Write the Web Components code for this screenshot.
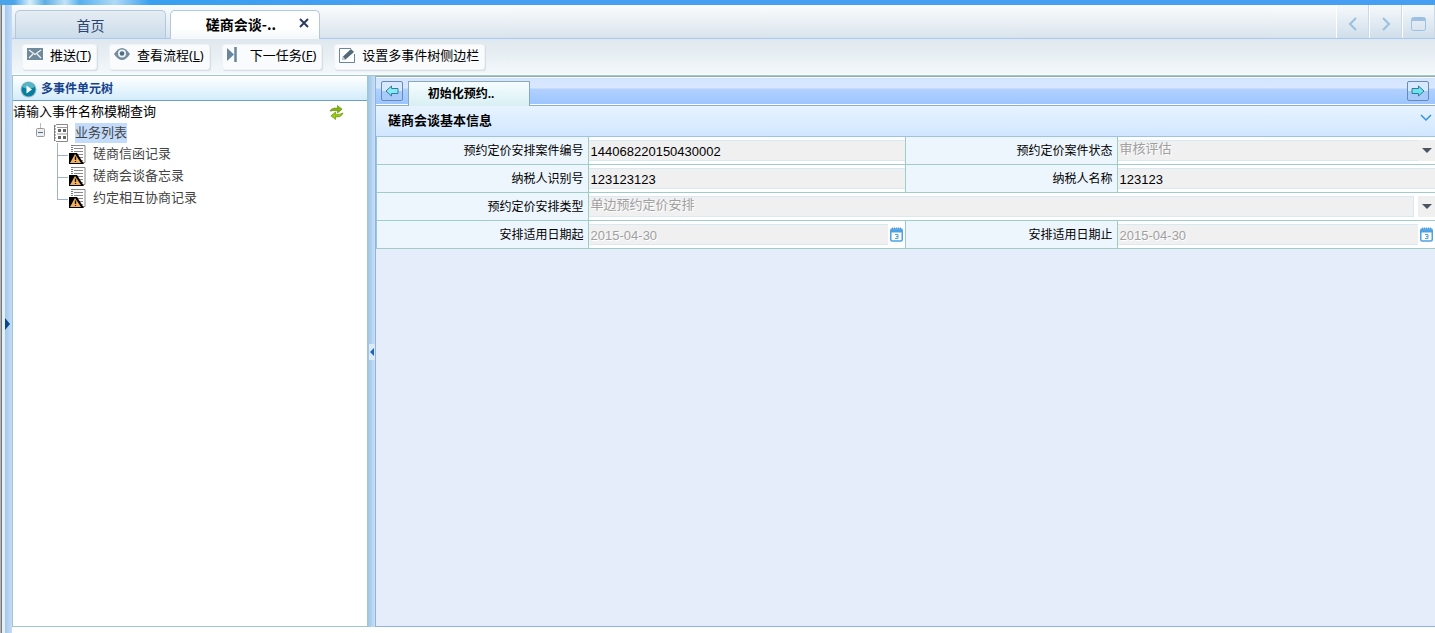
<!DOCTYPE html>
<html lang="zh-CN">
<head>
<meta charset="utf-8">
<title>磋商会谈</title>
<style>
html, body { margin: 0; }
body { font: 13px/20px "Liberation Sans", "Noto Sans CJK SC", sans-serif; color: #000; background: #fff; }
</style>
</head>
<body>
<app-shell>
  <tab-bar slot="tabs"></tab-bar>
  <tool-bar slot="tools">
    <tool-button key="T"><svg slot="icon" width="16" height="15" viewBox="0 0 16 15"><rect width="16" height="12" fill="#718a9b"/><path d="M2 2L8 6.500L14 2M2 10L6 6M14 10L10 6" fill="none" stroke="#edf3f6" stroke-width="1.300"/></svg>推送</tool-button>
    <tool-button key="L"><svg slot="icon" width="16" height="15" viewBox="0 0 16 15"><path d="M0 6Q8-6 16 6Q8 18 0 6Z" fill="#748c9e"/><circle cx="8" cy="5.500" r="4" fill="#edf3f6"/><circle cx="8" cy="5.500" r="2.300" fill="#526b7d"/></svg>查看流程</tool-button>
    <tool-button key="F"><svg slot="icon" width="16" height="16" viewBox="0 0 16 16"><path d="M0 1L7 7.500L0 14Z" fill="#68869c"/><path d="M8.500 0V15" stroke="#68869c" stroke-width="2.500"/></svg>下一任务</tool-button>
    <tool-button><svg slot="icon" width="16" height="17" viewBox="0 0 16 17"><path d="M12 1.500H.5V15.500H15.500V7" fill="#fff" stroke="#65879e"/><path d="M3 13L4 9.500L12 2L15 5L6.500 12.500Z" fill="#536879"/><path d="M3 13L4 9.500L6.500 12.500Z" fill="#c8d3da"/></svg>设置多事件树侧边栏</tool-button>
  </tool-bar>
  <side-panel slot="side" heading="多事件单元树"><event-tree></event-tree></side-panel>
  <work-area slot="main"><info-section heading="磋商会谈基本信息"><case-form></case-form></info-section></work-area>
</app-shell>
<script>
const define = (name, html, setup) => {
  const template = document.createElement('template');
  template.innerHTML = html;
  customElements.define(name, class extends HTMLElement {
    constructor() {
      super();
      this.attachShadow({ mode: 'open' }).append(template.content.cloneNode(true));
    }
    connectedCallback() { if (setup) setup(this, this.shadowRoot); }
  });
};

define('app-shell', `
<style>
:host { display: flex; flex-direction: column; min-height: 100vh; }
.band { height: 5px; background: linear-gradient(90deg, #49a4ea 0, #49a4ea 14px, #d8effb 30px, #5aaee4 45px, #c3e3f7 65px, #55b0ef 80px, #afdaf6 115px, #38a0ee 150px, #479ff4 400px); }
.body { flex: 1; display: flex; }
.rail { width: 12px; display: flex; align-items: center; box-sizing: border-box; padding: 10px 0 0 5px; background: linear-gradient(90deg, #b4b4b4 0 1px, #777 1px 2px, #e4eff8 2px 5px, #a4c8ee 5px, #c5dcf6 12px); }
.content { flex: 1; min-width: 0; display: flex; flex-direction: column; }
.panes { flex: 1; display: flex; border-top: 1px solid #9fc9c5; margin-bottom: 6px; }
slot[name=side]::slotted(*) { width: 354px; flex: none; }
.split { width: 7px; display: flex; align-items: center; justify-content: center; background: linear-gradient(90deg, #9ec5e4, #c8e0f6); }
.split button, .rail button { border: 0; padding: 0; background: none; display: flex; }
.split button { background: #dcebfa; padding: 4px 1px; }
slot[name=main]::slotted(*) { flex: 1; min-width: 0; }
</style>
<div class="band"></div>
<div class="body">
  <div class="rail"><button aria-label="展开"><svg width="6" height="12"><path d="M0 0L5 6L0 12Z" fill="#064788"/></svg></button></div>
  <div class="content">
    <slot name="tabs"></slot><slot name="tools"></slot>
    <div class="panes"><slot name="side"></slot>
      <div class="split"><button aria-label="收起"><svg width="4" height="8"><path d="M4 0L0 4L4 8Z" fill="#1d61c4"/></svg></button></div>
      <slot name="main"></slot></div>
  </div>
</div>`);

define('tab-bar', `
<style>
:host { display: flex; align-items: flex-end; height: 33px; border-bottom: 1px solid #a9c9ee; background: linear-gradient(#fafcfd, #dde6ee 90%, #d6e2ee); font-family: "Noto Sans CJK SC", sans-serif; padding-left: 3px; }
.tab { box-sizing: border-box; width: 151px; height: 28px; margin-right: 4px; border: 1px solid #b1c9df; border-bottom: 0; border-radius: 5px 5px 0 0; background: linear-gradient(#e6edf3, #cbdcea); color: #2d4471; font: inherit; font-size: 14px; padding: 0 10px 0; display: flex; align-items: center; justify-content: center; }
.active { height: 29px; width: 150px; margin-bottom: -1px; padding-bottom: 2px; background: linear-gradient(#fff, #fff 60%, #f3f7f9); color: #000; font-weight: bold; justify-content: flex-end; gap: 23px; }
.active button { border: 0; background: none; padding: 0 0 3px; display: flex; }
nav { margin-left: auto; display: flex; align-self: stretch; }
nav button { width: 33px; border: 0; border-left: 1px solid #fff; border-right: 1px solid #ccd9e6; background: linear-gradient(#f6f9fb, #cfdeeb); padding: 4px 0 0; display: flex; align-items: center; justify-content: center; }
svg { fill: none; stroke: #9dbfe0; stroke-width: 2; }
</style>
<button class="tab">首页</button>
<div class="tab active"><span>磋商会谈-..</span><button aria-label="关闭"><svg width="10" height="10" viewBox="0 0 10 10" style="stroke:#303c5c"><path d="M1 1L9 9M9 1L1 9"/></svg></button></div>
<nav>
<button aria-label="上一个"><svg width="10" height="14"><path d="M8 1L2 7L8 13"/></svg></button>
<button aria-label="下一个"><svg width="10" height="14"><path d="M2 1L8 7L2 13"/></svg></button>
<button aria-label="窗口"><svg width="15" height="14" viewBox="0 0 15 14"><rect x=".5" y=".5" width="14" height="13" rx="2" stroke-width="1"/><path d="M1 2.500H14" stroke-width="3"/></svg></button>
</nav>`);

define('tool-bar', `
<style>
:host { display: flex; align-items: flex-start; gap: 12px; height: 26px; padding: 5px 10px; background: linear-gradient(#dfe8ee, #f2f7fa 94%, #fff); }
</style><slot></slot>`);

define('tool-button', `
<style>
:host { display: block; }
button { height: 26px; border: 1px solid #eff3f6; border-radius: 3px; box-shadow: 1px 1px 1px #d5dde3; background: #f9fbfc; padding: 0 5px 4px 4px; display: flex; align-items: center; gap: 7px; font: 13px/20px "Noto Sans", "Noto Sans CJK SC", sans-serif; color: #000; white-space: nowrap; }
::slotted(svg) { flex: none; }
</style>
<button><slot name="icon"></slot><span><slot></slot><span class="key"></span></span></button>`,
(host, root) => {
  const key = host.getAttribute('key');
  if (key) root.querySelector('.key').innerHTML = '(<u>' + key + '</u>)';
});

define('side-panel', `
<style>
:host { display: block; background: #fff; border: 1px solid #9fc9c5; border-top: 0; }
header { height: 25px; box-sizing: border-box; padding: 2px 0 0 7px; display: flex; align-items: center; gap: 4px; border-bottom: 1px solid #6d9fcb; background: linear-gradient(#fff, #d3ecfb); color: #15428b; }
h2 { margin: 0; font-size: 12px; }
</style>
<header><svg width="17" height="17" viewBox="0 0 17 17"><circle cx="8.500" cy="8.500" r="8" fill="#a2bdc5"/><circle cx="8.500" cy="8.500" r="7" fill="#087e9e"/><path d="M2 6A7 7 0 0 1 15 6Q8 9 2 6Z" fill="#52b5c8"/><path d="M6.500 4.500L12 8.500L6.500 12.500Z" fill="#fff"/></svg><h2></h2></header>
<slot></slot>`,
(host, root) => { root.querySelector('h2').textContent = host.getAttribute('heading'); });

define('event-tree', `
<style>
:host { display: block; color: #444; }
.search { display: flex; justify-content: space-between; align-items: center; height: 22px; padding-right: 23px; color: #000; }
.search button { border: 0; padding: 0; background: none; display: flex; }
ul { list-style: none; margin: 0; padding: 0; }
.root { display: flex; align-items: center; height: 20px; padding-left: 22px; }
.root .icon { margin: 0 7px 0 8px; }
.root mark { background: #c4dcfc; color: inherit; }
li li { display: flex; align-items: center; height: 22px; padding-left: 44px; gap: 7px; }
</style>
<div class="search"><span>请输入事件名称模糊查询</span><button aria-label="刷新"><svg width="15" height="15" viewBox="0 0 16 15"><path d="M1 6Q3 2 9 3V0L14 4L9 8V5.500Q5 5 1 6Z" fill="#82b40c" stroke="#648b14" stroke-width=".7"/><path d="M15 8Q13 13 7 12V15L2 11L7 7V9.500Q11 10 15 8Z" fill="#9bca0a" stroke="#648b14" stroke-width=".7"/></svg></button></div>
<ul><li>
<div class="root"><svg width="11" height="20"><path d="M5.500 0V5" stroke="#bbb"/><rect x="1.500" y="5.500" width="8" height="8" rx="1" fill="#eee" stroke="#999"/><path d="M3 9.500H8" stroke="#456d9c"/></svg><svg class="icon" width="14" height="18" viewBox="0 0 14 18"><path d="M2 .5H13.500V17.500H2M.5 1V17" fill="#fff" stroke="#8a8a8a"/><path d="M.5 1V17" stroke="#777" stroke-width="2" stroke-dasharray="2 1"/><path d="M4 6.500H7M9 6.500H12M4 13.500H7M9 13.500H12" stroke="#666" stroke-width="3"/><path d="M3 3.500H13M3 10H13" stroke="#999"/></svg><mark>业务列表</mark></div>
<ul></ul></li></ul>`,
(host, root) => {
  root.querySelector('ul ul').innerHTML = ['磋商信函记录', '磋商会谈备忘录', '约定相互协商记录'].map((name, i) =>
    `<li><svg width="29" height="22" viewBox="0 0 29 22"><path d="M.5 0V${i < 2 ? 22 : 13}M1 12.500H11" fill="none" stroke="#9fb2c8"/><path d="M16 2.500H28V19.500H16" fill="#fff" stroke="#888"/><path d="M15 2V19" stroke="#777" stroke-width="2" stroke-dasharray="1 1"/><path d="M17 5.500H26M17 8.500H26M17 11.500H26M20 14.500H26M22 17.500H26" stroke="#888"/><path d="M12 10H20L27 21H12Z" fill="#000"/><path d="M18 11L24 20H13Z" fill="#f5b05b"/><path d="M18.500 13.500V17M18.500 18V19" stroke="#111" stroke-width="1.300"/></svg><span>${name}</span></li>`).join('');
});

define('work-area', `
<style>
:host { display: block; background: #e5ecfa; border: 1px solid #8db2e3; border-right: 0; border-top-color: #94aeb5; }
.bar { display: flex; align-items: center; justify-content: space-between; height: 28px; padding: 0 6px 0 5px; background: linear-gradient(#f4f8ff 0 1px, #d5e5ff 1px, #d9e7ff 11px, #b1d1ff 12px, #9cc6ff 27px, #fff 27px); border-bottom: 1px solid #8eafc4; }
.tab { height: 25px; width: 122px; margin: 4px auto -1px 5px; box-sizing: border-box; border: 1px solid #89a9b4; border-bottom: 0; background: linear-gradient(#f5fdff, #d9eff3); font: bold 12px/20px "Liberation Sans", "Noto Sans CJK SC", sans-serif; color: #000; padding: 0 16px 0 0; }
.nav { width: 22px; height: 20px; box-sizing: border-box; border: 1px solid #668ab9; border-radius: 2px; background: linear-gradient(#d8e8fd 0 50%, #a8caf8 50%); padding: 0; display: flex; align-items: center; justify-content: center; }
</style>
<div class="bar">
<button class="nav" aria-label="向左"><svg width="14" height="12" viewBox="0 0 14 12"><path d="M1 6L6.500 1V3.500H13V8.500H6.500V11Z" fill="#83edf3" stroke="#3979a0"/></svg></button>
<button class="tab">初始化预约..</button>
<button class="nav" aria-label="向右"><svg width="14" height="12" viewBox="0 0 14 12"><path d="M13 6L7.500 1V3.500H1V8.500H7.500V11Z" fill="#6be5ed" stroke="#3979a0"/></svg></button>
</div><slot></slot>`);

define('info-section', `
<style>
:host { display: block; }
header { height: 30px; box-sizing: border-box; display: flex; align-items: center; justify-content: space-between; padding: 0 3px 0 12px; background: linear-gradient(#e7f3ff, #d1e7ff); }
h2 { font-size: 13px; margin: 0; }
header button { border: 0; background: none; padding: 0 0 6px; display: flex; }
</style>
<header><h2></h2><button aria-label="折叠"><svg width="12" height="8"><path d="M1 1L6 6L11 1" fill="none" stroke="#3693df" stroke-width="1.500"/></svg></button></header>
<slot></slot>`,
(host, root) => { root.querySelector('h2').textContent = host.getAttribute('heading'); });

define('case-form', `
<style>
:host { display: block; }
table { width: 100%; table-layout: fixed; border-collapse: separate; border-spacing: 0; border: 0 solid #9bc4df; border-width: 1px 0 0 1px; }
.l { width: 20%; }
th, td { box-sizing: border-box; height: 28px; padding: 0; border-bottom: 1px solid #9fcdc6; border-right: 1px solid #9fcdc6; }
th { background: #edf5fd; font-weight: normal; font-size: 12px; text-align: right; padding-right: 4px; }
td { background: #fff; }
td:last-child { border-right: 0; }
.field { display: flex; }
input, select { appearance: none; flex: 1; min-width: 0; box-sizing: border-box; height: 21px; margin: 0; border: 1px solid #d8e9f1; border-left-width: 0; border-right-width: 0; border-radius: 0; padding: 1px 2px 0; background: #f0f0f0; color: #000; font: inherit; line-height: 18px; opacity: 1; }
:disabled { color: #a0a0a0; text-shadow: 1px 1px #fff; }
select { padding: 0 2px 3px; line-height: 16px; }
.wide select { border-right-width: 1px; margin-right: 4px; }
.arrow { width: 17px; height: 21px; background: #f0f0f0; display: flex; align-items: center; justify-content: center; }
.date { width: 17px; border: 0; padding: 0; background: none; display: flex; align-items: center; justify-content: center; }
</style>
<table><colgroup><col class="l"><col><col class="l"><col></colgroup><tbody>
<tr><th><label for="no">预约定价安排案件编号</label></th><td><div class="field"><input id="no" readonly value="144068220150430002"></div></td><th><label for="state">预约定价案件状态</label></th><td><div class="field"><select id="state" disabled><option>审核评估</option></select><span class="arrow"></span></div></td></tr>
<tr><th><label for="tax">纳税人识别号</label></th><td><div class="field"><input id="tax" readonly value="123123123"></div></td><th><label for="name">纳税人名称</label></th><td><div class="field"><input id="name" readonly value="123123"></div></td></tr>
<tr><th><label for="kind">预约定价安排类型</label></th><td colspan="3"><div class="field wide"><select id="kind" disabled><option>单边预约定价安排</option></select><span class="arrow"></span></div></td></tr>
<tr><th><label for="from">安排适用日期起</label></th><td><div class="field"><input id="from" disabled value="2015-04-30"><button class="date" aria-label="选择日期"></button></div></td><th><label for="to">安排适用日期止</label></th><td><div class="field"><input id="to" disabled value="2015-04-30"><button class="date" aria-label="选择日期"></button></div></td></tr>
</tbody></table>`,
(host, root) => {
  for (const el of root.querySelectorAll('.arrow')) el.innerHTML = '<svg width="10" height="8"><path d="M0 1H10L5 6Z" fill="#4b5364"/></svg>';
  for (const el of root.querySelectorAll('.date')) el.innerHTML = '<svg width="13" height="15" viewBox="0 0 13 15"><rect x=".75" y="2" width="11.500" height="12" rx="1.500" fill="#fff" stroke="#4da3e1" stroke-width="1.500"/><path d="M1 4H12" stroke="#4da3e1" stroke-width="3"/><path d="M2 1.500H12" stroke="#4da3e1" stroke-dasharray="1 1" stroke-width="2"/><path d="M5 7.500H8V11.500H5M6 9.500H8" fill="none" stroke="#4da3e1"/></svg>';
});
</script>
</body>
</html>
